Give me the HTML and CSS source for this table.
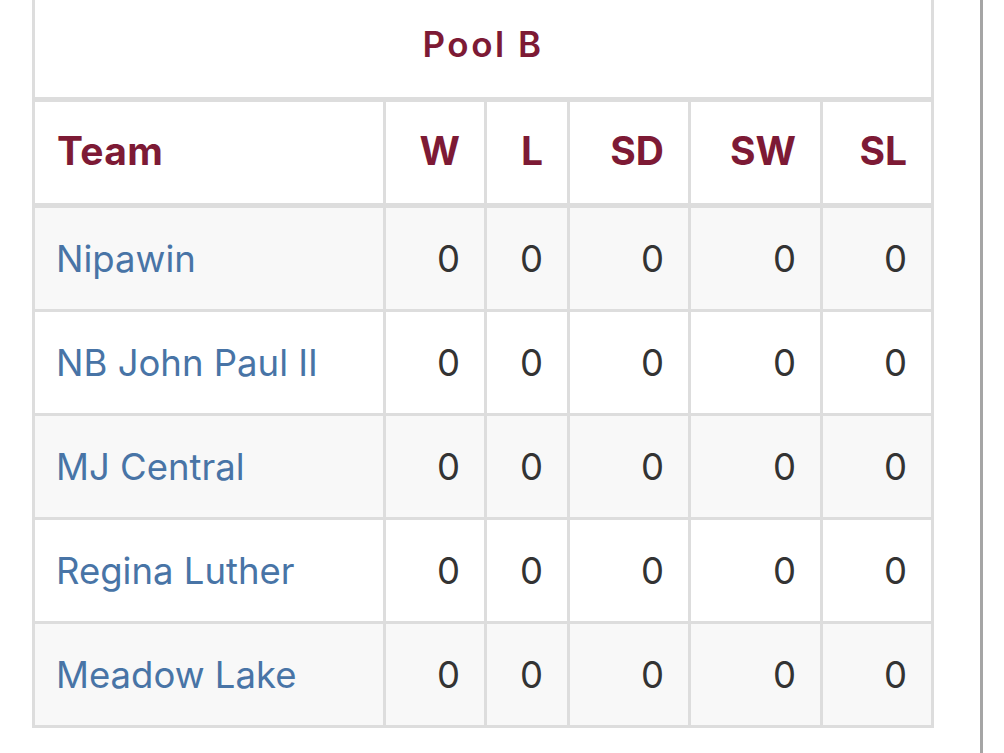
FILE: index.html
```html
<!DOCTYPE html>
<html lang="en">
<head>
<meta charset="utf-8">
<title>Pool B</title>
<link rel="stylesheet" href="styles.css">
</head>
<body>
<div class="page">
  <div class="content">
    <table class="standings">
      <colgroup>
        <col class="team-col">
        <col class="w-col">
        <col class="l-col">
        <col class="sd-col">
        <col class="sw-col">
        <col class="sl-col">
      </colgroup>
      <thead>
        <tr><th class="title" colspan="6">Pool B</th></tr>
        <tr class="cols">
          <th class="team-head">Team</th>
          <th>W</th>
          <th>L</th>
          <th>SD</th>
          <th>SW</th>
          <th>SL</th>
        </tr>
      </thead>
      <tbody>
        <tr class="alt"><td class="team"><a href="#">Nipawin</a></td><td>0</td><td>0</td><td>0</td><td>0</td><td>0</td></tr>
        <tr><td class="team"><a href="#">NB John Paul II</a></td><td>0</td><td>0</td><td>0</td><td>0</td><td>0</td></tr>
        <tr class="alt"><td class="team"><a href="#">MJ Central</a></td><td>0</td><td>0</td><td>0</td><td>0</td><td>0</td></tr>
        <tr><td class="team"><a href="#">Regina Luther</a></td><td>0</td><td>0</td><td>0</td><td>0</td><td>0</td></tr>
        <tr class="alt"><td class="team"><a href="#">Meadow Lake</a></td><td>0</td><td>0</td><td>0</td><td>0</td><td>0</td></tr>
      </tbody>
    </table>
  </div>
  <div class="rail"></div>
</div>
</body>
</html>
```
FILE: styles.css
```css
* { box-sizing: border-box; }

html, body {
  margin: 0;
  padding: 0;
  background: #ffffff;
}

body {
  font-family: "Inter", "Noto Sans", sans-serif;
  color: #333333;
}

.page {
  display: flex;
  height: 753px;
  overflow: hidden;
}

.content {
  width: 980px;
  padding-left: 32px;
}

.rail {
  width: 3px;
  height: 100%;
  background: #a5a5a5;
}

.standings {
  width: 902px;
  border-collapse: separate;
  border-spacing: 0;
  table-layout: fixed;
}

.team-col { width: 354px; }
.w-col { width: 101px; }
.l-col { width: 83px; }
.sd-col { width: 121px; }
.sw-col { width: 132px; }
.sl-col { width: 111px; }

.standings th,
.standings td {
  border-right: 3px solid #dddddd;
  border-bottom: 3px solid #dddddd;
  padding: 0 24px 0 0;
  text-align: right;
  vertical-align: middle;
  white-space: nowrap;
}

.standings th:first-child,
.standings td:first-child {
  border-left: 3px solid #dddddd;
}

.standings .title {
  height: 102px;
  border-bottom-width: 5px;
  padding: 0 0 9px 0;
  text-align: center;
  font-size: 35px;
  font-weight: 600;
  letter-spacing: 2.5px;
  color: #7d1a35;
  background: #ffffff;
}

.cols th {
  height: 106px;
  border-bottom-width: 5px;
  padding-bottom: 4px;
  font-size: 39px;
  font-weight: 700;
  color: #7d1a35;
  background: #ffffff;
}

.cols .team-head {
  text-align: left;
  padding-left: 22px;
  letter-spacing: 0.3px;
}

.standings td {
  height: 104px;
  font-size: 36.5px;
  font-weight: 400;
  color: #333333;
}

.standings tbody tr { background: #ffffff; }
.standings tbody tr.alt { background: #f8f8f8; }

.standings td.team {
  text-align: left;
  padding-left: 21px;
}

.team a {
  color: #4874a6;
  text-decoration: none;
}
```
